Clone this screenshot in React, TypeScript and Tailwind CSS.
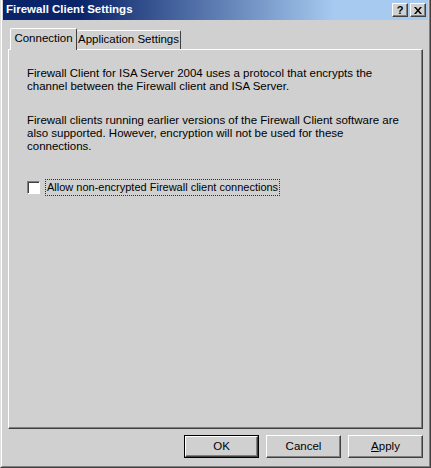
import React from 'react'

const font = { fontFamily: '"Liberation Sans", Arial, sans-serif' }

function CaptionButton({ children }: { children: React.ReactNode }) {
  return (
    <div className="flex h-[14px] w-[16px] items-center justify-center border-t border-l border-white border-r border-b border-r-[#404040] border-b-[#404040] bg-[#d0d0d0] text-[11px] font-bold leading-none text-black shadow-[inset_-1px_-1px_0_#808080]">
      {children}
    </div>
  )
}

function PushButton({
  label,
  isDefault,
}: {
  label: React.ReactNode
  isDefault?: boolean
}) {
  return (
    <div
      className={
        isDefault
          ? 'h-[23px] w-[75px] border border-black'
          : 'h-[23px] w-[75px]'
      }
    >
      <div className="flex h-full w-full items-center justify-center border-t border-l border-white border-r border-b border-r-[#404040] border-b-[#404040] text-[11.5px] text-black shadow-[inset_-1px_-1px_0_#808080]">
        {label}
      </div>
    </div>
  )
}

export default function App() {
  return (
    <div
      style={font}
      className="flex h-[468px] w-[431px] flex-col border-l border-r border-b border-l-[#e0e0e0] border-r-[#404040] border-b-[#404040] bg-[#d0d0d0]"
    >
      <div className="flex h-full flex-col border-l border-r border-b border-l-white border-r-[#808080] border-b-[#808080] pl-[1px] pr-[1px]">
        {/* title bar */}
        <div className="flex h-[20px] shrink-0 items-center justify-between bg-[linear-gradient(to_right,#0a246a_18%,#a6caf0_78%)] pl-[3px] pr-[2px]">
          <span className="text-[11.5px] font-bold text-white">
            Firewall Client Settings
          </span>
          <div className="flex gap-[2px]">
            <CaptionButton>?</CaptionButton>
            <CaptionButton>
              <svg width="8" height="7" viewBox="0 0 8 7">
                <path d="M0 0h2l2 2.5L6 0h2L5 3.5 8 7H6L4 4.5 2 7H0l3-3.5z" fill="#000" />
              </svg>
            </CaptionButton>
          </div>
        </div>

        {/* tabs */}
        <div className="mt-[8px] flex shrink-0 items-end pl-[7px] pr-[5px]">
          <div className="relative z-10 -mb-px flex h-[22px] w-[67px] items-center justify-center whitespace-nowrap rounded-t-[2px] border-t border-l border-r border-t-white border-l-white border-r-[#404040] bg-[#d0d0d0] pb-[2px] text-[11.5px] text-black">
            Connection
          </div>
          <div className="flex h-[19px] w-[104px] items-center justify-center whitespace-nowrap rounded-t-[2px] border-t border-r border-t-white border-r-[#404040] text-[11.5px] text-black">
            Application Settings
          </div>
        </div>

        {/* tab panel */}
        <div className="ml-[5px] mr-[5px] h-[380px] shrink-0 border-t border-l border-r border-b border-t-white border-l-white border-r-[#404040] border-b-[#404040]">
          <div className="h-full border-r border-b border-r-[#808080] border-b-[#808080] pl-[18px] pr-[20px] pt-[17px] text-[11.5px] leading-[13px] text-black">
            <p>
              Firewall Client for ISA Server 2004 uses a protocol that encrypts
              the channel between the Firewall client and ISA Server.
            </p>
            <p className="mt-[21px]">
              Firewall clients running earlier versions of the Firewall Client
              software are also supported. However, encryption will not be used
              for these connections.
            </p>
            <div className="mt-[26px] flex items-center gap-[5px]">
              <div className="h-[13px] w-[13px] border-t border-l border-r border-b border-t-[#808080] border-l-[#808080] border-r-white border-b-white">
                <div className="h-full w-full border-t border-l border-t-[#404040] border-l-[#404040] bg-white" />
              </div>
              <span className="border border-dotted border-[#303030] px-[1px] py-[1px] text-[11px] leading-[13px]">
                Allow non-encrypted Firewall client connections
              </span>
            </div>
          </div>
        </div>

        {/* buttons */}
        <div className="mt-[6px] flex shrink-0 justify-end gap-[7px] pr-[5px]">
          <PushButton label="OK" isDefault />
          <PushButton label="Cancel" />
          <PushButton
            label={
              <span>
                <span className="underline">A</span>pply
              </span>
            }
          />
        </div>
      </div>
    </div>
  )
}
